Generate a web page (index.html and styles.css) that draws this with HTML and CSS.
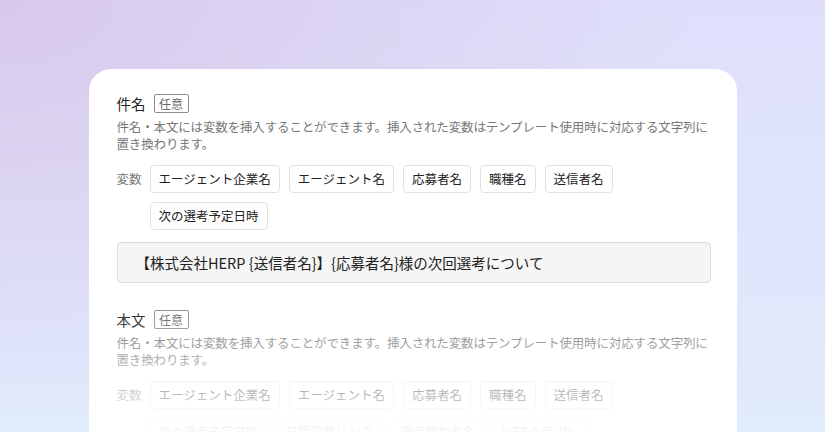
FILE: index.html
```html
<!DOCTYPE html>
<html lang="ja">
<head>
<meta charset="utf-8">
<link rel="stylesheet" href="styles.css">
</head>
<body>
<div class="page">
  <div class="card">
    <section class="field">
      <div class="field-head">
        <span class="field-title">件名</span>
        <span class="badge">任意</span>
      </div>
      <p class="desc">件名・本文には変数を挿入することができます。挿入された変数はテンプレート使用時に対応する文字列に置き換わります。</p>
      <div class="vars">
        <span class="vars-label">変数</span>
        <div class="chips">
          <span class="chip">エージェント企業名</span>
          <span class="chip">エージェント名</span>
          <span class="chip">応募者名</span>
          <span class="chip">職種名</span>
          <span class="chip">送信者名</span>
          <span class="chip">次の選考予定日時</span>
        </div>
      </div>
      <div class="input">【株式会社HERP {送信者名}】{応募者名}様の次回選考について</div>
    </section>
    <section class="field">
      <div class="field-head">
        <span class="field-title">本文</span>
        <span class="badge">任意</span>
      </div>
      <p class="desc">件名・本文には変数を挿入することができます。挿入された変数はテンプレート使用時に対応する文字列に置き換わります。</p>
      <div class="vars">
        <span class="vars-label">変数</span>
        <div class="chips">
          <span class="chip">エージェント企業名</span>
          <span class="chip">エージェント名</span>
          <span class="chip">応募者名</span>
          <span class="chip">職種名</span>
          <span class="chip">送信者名</span>
          <span class="chip">次の選考予定日時</span>
          <span class="chip">日程調整リンク</span>
          <span class="chip">選考参加者名</span>
          <span class="chip">WEB会議URL</span>
        </div>
      </div>
    </section>
    <div class="fade"></div>
  </div>
</div>
</body>
</html>
```

FILE: styles.css
```css
* { box-sizing: border-box; }

html, body {
  margin: 0;
  padding: 0;
}

body {
  width: 825px;
  height: 432px;
  overflow: hidden;
  font-family: "Noto Sans CJK JP", "Noto Sans", sans-serif;
  background:
    radial-gradient(ellipse 700px 420px at 0% 0%, #d8c9ea 0%, rgba(216, 201, 234, 0) 100%),
    linear-gradient(to bottom, #dfdffb 0%, #e0ebfc 100%);
}

.page {
  height: 432px;
  padding-top: 69px;
}

.card {
  position: relative;
  width: 648px;
  height: 363px;
  margin: 0 auto;
  background: #ffffff;
  border-radius: 22px 22px 0 0;
  padding: 25px 26px 0 28px;
  overflow: hidden;
}

.field + .field {
  margin-top: 27px;
}

.field-head {
  display: flex;
  align-items: center;
  gap: 8px;
  height: 19px;
}

.field-title {
  font-size: 14.5px;
  line-height: 19px;
  color: #222222;
}

.badge {
  font-size: 12px;
  line-height: 17px;
  padding: 0 4.5px;
  border: 1px solid #8c8c8c;
  border-radius: 2px;
  color: #6a6a6a;
}

.desc {
  margin: 5px 0 0;
  font-size: 12.5px;
  line-height: 17px;
  letter-spacing: -0.15px;
  color: #777777;
}

.vars {
  display: flex;
  gap: 8px;
  margin-top: 13px;
}

.vars-label {
  flex: none;
  font-size: 12.5px;
  line-height: 28px;
  color: #777777;
}

.chips {
  display: flex;
  flex-wrap: wrap;
  gap: 9px;
}

.chip {
  height: 28px;
  padding: 0 8px;
  border: 1px solid #e0e0e0;
  border-radius: 4px;
  background: #ffffff;
  font-size: 12.5px;
  line-height: 26px;
  color: #222222;
  white-space: nowrap;
}

.input {
  margin-top: 12px;
  height: 41px;
  padding: 0 18px;
  background: #f5f5f5;
  border: 1px solid #dcdcdc;
  border-radius: 4px;
  font-size: 14.5px;
  line-height: 39px;
  color: #222222;
}

.fade {
  position: absolute;
  inset: 0;
  background: linear-gradient(to bottom, rgba(255, 255, 255, 0) 236px, rgba(255, 255, 255, 0.97) 363px);
  pointer-events: none;
}
```
